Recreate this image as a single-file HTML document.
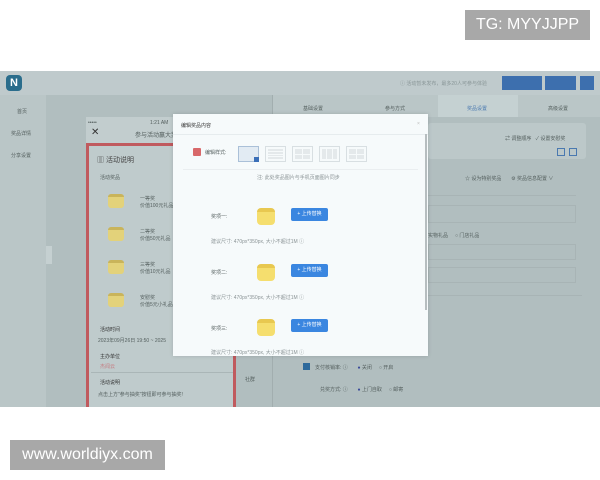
<!DOCTYPE html>
<html><head><meta charset="utf-8"><style>
*{margin:0;padding:0;box-sizing:border-box}
body{width:600px;height:480px;background:#fff;position:relative;overflow:hidden;font-family:"Liberation Sans","Noto Sans CJK SC",sans-serif;color:#55605f}
.a{position:absolute}
.t{font-size:5px;white-space:nowrap}
.gift{position:absolute;width:16px;height:14px;background:#e3d27a;border-radius:3px;border-top:3px solid #c9b45a}
.mg{position:absolute;width:18px;height:17px;background:#f5de6e;border-radius:4px;border-top:4px solid #e8c850}
.btn{position:absolute;width:37px;height:13px;background:#3a86e0;border-radius:2px;color:#fff;font-size:5px;line-height:13px;text-align:center}
.st{position:absolute;top:32px;width:21px;height:16px;border:1px solid #d8dfe2;padding:2px;display:grid;gap:1px}
.st i{background:#e4e9eb;display:block}
</style></head><body>
<div class="a" style="left:465px;top:10px;width:125px;height:30px;background:#a8a8a8;color:#fff;font-size:16px;line-height:30px;text-align:center">TG: MYYJJPP</div>
<div class="a" style="left:10px;top:440px;width:155px;height:30px;background:#a8a8a8;color:#fff;font-size:16px;line-height:30px;text-align:center">www.worldiyx.com</div>

<div class="a" style="left:0;top:71px;width:600px;height:336px;background:#b1bebf">
 <div class="a" style="left:0;top:0;width:600px;height:24px;background:#bfcacc"></div>
 <div class="a" style="left:6px;top:4px;width:16px;height:16px;border-radius:4px;background:#2a6d8c;color:#fff;font-weight:bold;font-size:11px;text-align:center;line-height:16px">N</div>
 <div class="a t" style="left:400px;top:9px;color:#8a9798">ⓘ 活动暂未发布，最多20人可参与体验</div>
 <div class="a" style="left:502px;top:5px;width:40px;height:14px;background:#3d6fae"></div>
 <div class="a" style="left:545px;top:5px;width:31px;height:14px;background:#3d6fae"></div>
 <div class="a" style="left:580px;top:5px;width:14px;height:14px;background:#3d6fae"></div>
 <div class="a" style="left:0;top:24px;width:46px;height:312px;background:#bac6c7"></div>
 <div class="a t" style="left:17px;top:37px">首页</div>
 <div class="a t" style="left:11px;top:59px">奖品详情</div>
 <div class="a t" style="left:11px;top:81px">分享设置</div>
 <div class="a" style="left:46px;top:175px;width:6px;height:18px;background:#c5d0d1"></div>
 <div class="a" style="left:86px;top:46px;width:150px;height:290px;background:#c2cdce"></div>
 <div class="a t" style="left:88px;top:49px">•••••</div>
 <div class="a t" style="left:150px;top:49px">1:21 AM</div>
 <div class="a" style="left:91px;top:56px;font-size:10px;color:#333">✕</div>
 <div class="a" style="left:135px;top:59px;font-size:6px">参与活动赢大奖</div>
 <div class="a" style="left:86px;top:72px;width:150px;height:264px;border:3px solid #c05a5e;border-bottom:none;background:#bfcbcc"></div>
 <div class="a" style="left:97px;top:84px;font-size:7px;color:#444">▥ 活动说明</div>
 <div class="a t" style="left:100px;top:103px">活动奖品</div>
 <div class="gift" style="left:108px;top:123px"></div><div class="a t" style="left:140px;top:124px">一等奖<br>价值100元礼品</div>
 <div class="gift" style="left:108px;top:156px"></div><div class="a t" style="left:140px;top:157px">二等奖<br>价值50元礼品</div>
 <div class="gift" style="left:108px;top:189px"></div><div class="a t" style="left:140px;top:190px">三等奖<br>价值10元礼品</div>
 <div class="gift" style="left:108px;top:222px"></div><div class="a t" style="left:140px;top:223px">安慰奖<br>价值5元小礼品</div>
 <div class="a t" style="left:100px;top:255px;color:#333">活动时间</div>
 <div class="a t" style="left:98px;top:266px">2023年09月26日 19:50 ~ 2025</div>
 <div class="a t" style="left:100px;top:282px;color:#333">主办单位</div>
 <div class="a t" style="left:100px;top:292px;color:#c57a80">杰闻云</div>
 <div class="a" style="left:91px;top:301px;width:142px;height:1px;background:#aab6b7"></div>
 <div class="a t" style="left:100px;top:308px;color:#333">活动说明</div>
 <div class="a t" style="left:98px;top:320px">点击上方"参与抽奖"按钮即可参与抽奖!</div>
 <div class="a" style="left:272px;top:24px;width:1px;height:312px;background:#a2aeaf"></div>
 <div class="a t" style="left:245px;top:305px">社群</div>
 <div class="a" style="left:273px;top:24px;width:327px;height:22px;background:#bac6c7"></div>
 <div class="a" style="left:438px;top:24px;width:80px;height:22px;background:#c5d1d2"></div>
 <div class="a t" style="left:303px;top:34px">基础设置</div>
 <div class="a t" style="left:385px;top:34px">参与方式</div>
 <div class="a t" style="left:467px;top:34px;color:#4a79b0">奖品设置</div>
 <div class="a t" style="left:548px;top:34px">高级设置</div>
 <div class="a" style="left:428px;top:52px;width:158px;height:36px;background:#bcc8c9;border-radius:3px"></div>
 <div class="a t" style="left:505px;top:64px">⇄ 调整顺序 &nbsp; ✓ 设置安慰奖</div>
 <div class="a" style="left:557px;top:77px;width:8px;height:8px;border:1px solid #4a79b0"></div>
 <div class="a" style="left:569px;top:77px;width:8px;height:8px;border:1px solid #4a79b0"></div>
 <div class="a t" style="left:465px;top:104px">☆ 设为特别奖品 &nbsp;&nbsp;&nbsp;&nbsp;&nbsp; ⚙ 奖品信息配置 ∨</div>
 <div class="a" style="left:428px;top:124px;width:148px;height:1px;background:#a8b4b5"></div>
 <div class="a" style="left:428px;top:134px;width:148px;height:18px;border:1px solid #a8b4b5"></div>
 <div class="a t" style="left:428px;top:161px">实物礼品 &nbsp;&nbsp;&nbsp; ○ 门店礼品</div>
 <div class="a" style="left:428px;top:173px;width:148px;height:16px;border:1px solid #a8b4b5"></div>
 <div class="a" style="left:428px;top:196px;width:148px;height:16px;border:1px solid #a8b4b5"></div>
 <div class="a" style="left:360px;top:224px;width:222px;height:1px;background:#a8b4b5"></div>
 <div class="a" style="left:303px;top:292px;width:7px;height:7px;background:#2e6a9c"></div>
 <div class="a t" style="left:315px;top:293px">支付核销率: ⓘ &nbsp;&nbsp;&nbsp;&nbsp;&nbsp; <span style="color:#3a4a9a">●</span> 关闭 &nbsp;&nbsp;&nbsp; ○ 开启</div>
 <div class="a t" style="left:320px;top:315px">兑奖方式: ⓘ &nbsp;&nbsp;&nbsp;&nbsp;&nbsp; <span style="color:#3a4a9a">●</span> 上门自取 &nbsp;&nbsp;&nbsp; ○ 邮寄</div>
 <div class="a" style="left:173px;top:43px;width:255px;height:242px;background:#f6fafb;box-shadow:0 0 4px rgba(0,0,0,.15)">
  <div class="a t" style="left:8px;top:8px;color:#333">编辑奖品内容</div>
  <div class="a t" style="left:244px;top:7px;color:#bbb">×</div>
  <div class="a" style="left:0;top:20px;width:255px;height:1px;background:#e6ecee"></div>
  <div class="a" style="left:20px;top:34px;width:8px;height:8px;background:#d8686a;border-radius:1px"></div>
  <div class="a t" style="left:32px;top:35px">编辑样式:</div>
  <div class="a" style="left:65px;top:32px;width:21px;height:16px;border:1px solid #aac0d8;background:#e2ebf3"></div>
  <div class="a" style="left:81px;top:43px;width:5px;height:5px;background:#3a6fb8"></div>
  <div class="st" style="left:92px;grid-template-rows:repeat(4,1fr)"><i></i><i></i><i></i><i></i></div>
  <div class="st" style="left:119px;grid-template-columns:1fr 1fr"><i></i><i></i><i></i><i></i></div>
  <div class="st" style="left:146px;grid-template-columns:1fr 1fr 1fr"><i></i><i></i><i></i></div>
  <div class="st" style="left:173px;grid-template-columns:1fr 1fr"><i></i><i></i><i></i><i></i></div>
  <div class="a" style="left:10px;top:55px;width:235px;height:1px;background:#eaeef0"></div>
  <div class="a t" style="left:84px;top:60px;color:#8a9395">注: 此处奖品图片与手机页面图片同步</div>
  <div class="a" style="left:252px;top:20px;width:2px;height:176px;background:#b6bdbf"></div>
  <div class="a t" style="left:38px;top:99px">奖项一:</div>
  <div class="mg" style="left:84px;top:94px"></div>
  <div class="btn" style="left:118px;top:94px">+ 上传替换</div>
  <div class="a t" style="left:38px;top:124px;color:#8a9395">建议尺寸: 470px*350px, 大小不超过1M ⓘ</div>
  <div class="a t" style="left:38px;top:155px">奖项二:</div>
  <div class="mg" style="left:84px;top:150px"></div>
  <div class="btn" style="left:118px;top:150px">+ 上传替换</div>
  <div class="a t" style="left:38px;top:180px;color:#8a9395">建议尺寸: 470px*350px, 大小不超过1M ⓘ</div>
  <div class="a t" style="left:38px;top:211px">奖项三:</div>
  <div class="mg" style="left:84px;top:205px"></div>
  <div class="btn" style="left:118px;top:205px">+ 上传替换</div>
  <div class="a t" style="left:38px;top:235px;color:#8a9395">建议尺寸: 470px*350px, 大小不超过1M ⓘ</div>
 </div>
</div>
</body></html>
